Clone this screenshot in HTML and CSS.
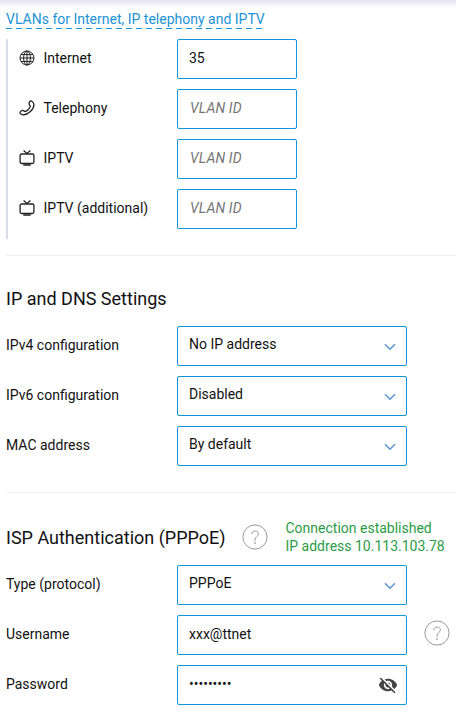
FILE: index.html
```html
<!DOCTYPE html>
<html lang="en">
<head>
<meta charset="utf-8">
<title>Internet settings</title>
<link rel="stylesheet" href="styles.css">
</head>
<body>
<svg class="defs" width="0" height="0">
  <symbol id="tv" viewBox="0 0 16 16"><rect x="1.100" y="4" width="13.800" height="9.500" rx="1.500"/><path d="M4.600.5 8 3.400 11.400.5"/><path d="M4.300 15h7.400" stroke-width="1.500"/></symbol>
  <symbol id="chevron" viewBox="0 0 12 8"><path d="M1 1.2 6 6.2 11 1.2"/></symbol>
  <symbol id="help" viewBox="0 0 26 26"><circle cx="13" cy="13" r="12.1"/><path d="M9.7 10.2c0-2 1.4-3.2 3.4-3.2s3.3 1.1 3.3 2.9c0 2.6-3.4 2.7-3.4 6V17"/><path d="M13 18.3v1.5" stroke-width="1.6"/></symbol>
</svg>
<main class="page">
  <div class="toggle"><a class="link">VLANs for Internet, IP telephony and IPTV</a></div>
  <section class="vlans">
    <div class="row">
      <div class="label"><svg class="icon" viewBox="0 0 16 16"><circle cx="8" cy="8" r="7"/><ellipse cx="8" cy="8" rx="3.4" ry="7"/><path d="M8 1v14M1 8h14M2 4.6h12M2 11.4h12"/></svg>Internet</div>
      <div class="field">35</div>
    </div>
    <div class="row">
      <div class="label"><svg class="icon phone" viewBox="0 0 16 16"><path d="M11.3.9c1.2-.3 3.5 1.700 3.600 3.600C15 9.500 9 14.800 4.300 14.900 2.600 14.900.9 13.500 1 12.600c.1-.9 2.200-2.400 3-2.300.9.100 1.400 1.400 2.300 1.200 1.700-.4 4.700-3.400 5-5.100.1-.8-1.100-1.300-1.200-2.200-.1-.9.500-3.100 1.200-3.300Z"/></svg>Telephony</div>
      <div class="field placeholder">VLAN ID</div>
    </div>
    <div class="row">
      <div class="label"><svg class="icon tv"><use href="#tv"/></svg>IPTV</div>
      <div class="field placeholder">VLAN ID</div>
    </div>
    <div class="row">
      <div class="label"><svg class="icon tv"><use href="#tv"/></svg>IPTV (additional)</div>
      <div class="field placeholder">VLAN ID</div>
    </div>
  </section>
  <section class="group">
    <h2 class="title">IP and DNS Settings</h2>
    <div class="row"><div class="label">IPv4 configuration</div><div class="field select">No IP address<svg class="chevron"><use href="#chevron"/></svg></div></div>
    <div class="row"><div class="label">IPv6 configuration</div><div class="field select">Disabled<svg class="chevron"><use href="#chevron"/></svg></div></div>
    <div class="row"><div class="label">MAC address</div><div class="field select">By default<svg class="chevron"><use href="#chevron"/></svg></div></div>
  </section>
  <section class="group auth">
    <header class="auth-head">
      <h2 class="title">ISP Authentication (PPPoE)</h2>
      <svg class="help"><use href="#help"/></svg>
      <div class="status">Connection established<br><span class="address">IP address 10.113.103.78</span></div>
    </header>
    <div class="row"><div class="label">Type (protocol)</div><div class="field select">PPPoE<svg class="chevron"><use href="#chevron"/></svg></div></div>
    <div class="row"><div class="label">Username</div><div class="field wide">xxx@ttnet</div><svg class="help side"><use href="#help"/></svg></div>
    <div class="row"><div class="label">Password</div><div class="field wide password"><span class="dots">•••••••••</span><svg class="eye" viewBox="0 0 24 24"><path d="M12 7c2.760 0 5 2.240 5 5 0 .650-.130 1.260-.360 1.830l2.920 2.920c1.510-1.260 2.700-2.890 3.430-4.750-1.730-4.390-6-7.500-11-7.500-1.400 0-2.740.250-3.980.700l2.160 2.160C10.740 7.130 11.350 7 12 7zM2 4.270l2.280 2.280.460.460C3.080 8.300 1.780 10.020 1 12c1.730 4.390 6 7.500 11 7.500 1.550 0 3.030-.300 4.380-.840l.420.420L19.730 22 21 20.730 3.270 3 2 4.270zM7.530 9.800l1.550 1.550c-.050.210-.080.430-.080.650 0 1.660 1.340 3 3 3 .220 0 .440-.030.650-.080l1.550 1.550c-.670.330-1.410.530-2.200.530-2.760 0-5-2.240-5-5 0-.790.200-1.530.530-2.200zm4.310-.780 3.150 3.150.020-.160c0-1.660-1.340-3-3-3l-.170.010z"/></svg></div></div>
  </section>
</main>
</body>
</html>
```
FILE: styles.css
```css
* { box-sizing: border-box; }

body {
  margin: 0;
  background: #fff;
  color: #111;
  font: 14px/18px Roboto, "Liberation Sans", sans-serif;
}

.defs { display: block; height: 0; }

.page {
  height: 718px;
  padding: 10px 0 0 6px;
  background: linear-gradient(#e3e3f0, #fff 8px) no-repeat;
}

.toggle { height: 29px; }

.link {
  display: block;
  width: 259px;
  height: 19px;
  color: #1c93d5;
  white-space: nowrap;
  background: repeating-linear-gradient(90deg, #0f95d8 0 6px, transparent 6px 10px) bottom / 100% 1px no-repeat;
}

.vlans {
  height: 200px;
  padding-left: 11px;
  border-left: 2px solid #d8dbe8;
}

.row {
  display: flex;
  align-items: center;
  height: 40px;
  margin-bottom: 10px;
}

.label {
  display: flex;
  align-items: center;
  flex: none;
  width: 171px;
  padding-bottom: 2px;
  white-space: nowrap;
}

.vlans .label { width: 158px; }

.icon {
  width: 16px;
  height: 16px;
  margin-right: 8.5px;
  fill: none;
  stroke: #222;
  stroke-width: 1;
}

.icon.phone,
.icon.tv { stroke-width: 1.3; }

.field {
  display: flex;
  align-items: center;
  width: 120px;
  height: 40px;
  padding: 0 11px 2px;
  border: 1px solid #0f95d8;
  border-radius: 2px;
}

.placeholder {
  padding-left: 12px;
  color: #757575;
  font-style: italic;
  letter-spacing: 0.15px;
}

.select, .wide { width: 230px; justify-content: space-between; }
.select { padding-bottom: 4px; }

.chevron {
  width: 12px;
  height: 8px;
  margin: 5px -0.5px 0 0;
  fill: none;
  stroke: #5c97d0;
  stroke-width: 1.6;
}

.group {
  height: 237px;
  padding-top: 33px;
  border-top: 1px solid #eee;
}

.vlans + .group { margin-top: 16px; }

.title {
  margin: 0 0 17px;
  font-size: 18px;
  font-weight: 400;
  line-height: 20px;
  white-space: nowrap;
}

.auth { padding-top: 26px; }

.auth-head {
  display: flex;
  align-items: center;
  height: 36px;
  margin-bottom: 10px;
}

.auth-head .title {
  width: 236px;
  margin: 2px 0 0;
}

.help {
  flex: none;
  width: 26px;
  height: 26px;
  fill: none;
  stroke: #999;
  stroke-width: 1;
}

.side { margin: 0 0 4px 17px; }

.status {
  margin-left: 17.5px;
  color: #2b9c46;
  white-space: nowrap;
}

.password { padding-right: 8px; }

.eye {
  width: 20px;
  height: 20px;
  margin-top: 2px;
  fill: #444;
}
```
